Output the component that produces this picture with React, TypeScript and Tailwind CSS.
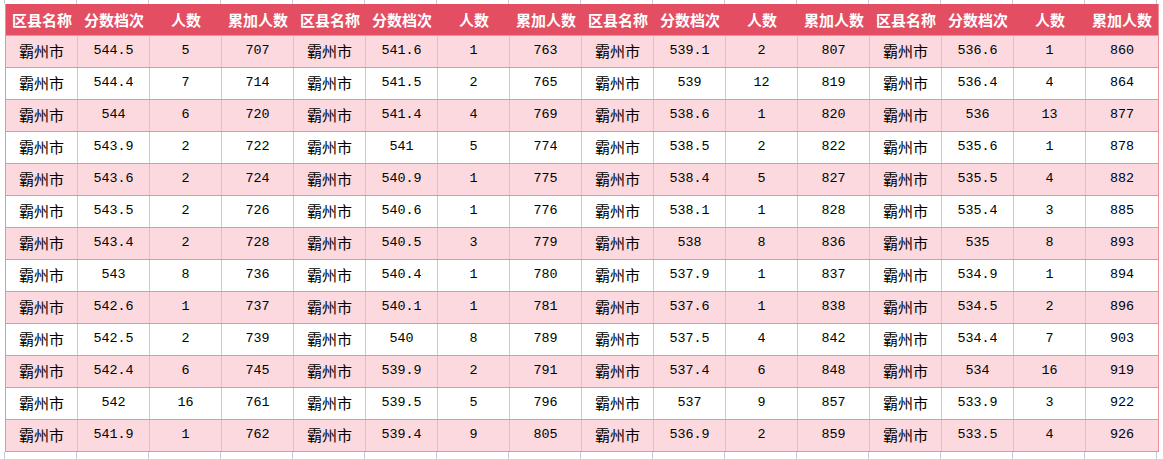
import React from "react";

const rows: [string, string, string][][] = [
  [["544.5","5","707"],["541.6","1","763"],["539.1","2","807"],["536.6","1","860"]],
  [["544.4","7","714"],["541.5","2","765"],["539","12","819"],["536.4","4","864"]],
  [["544","6","720"],["541.4","4","769"],["538.6","1","820"],["536","13","877"]],
  [["543.9","2","722"],["541","5","774"],["538.5","2","822"],["535.6","1","878"]],
  [["543.6","2","724"],["540.9","1","775"],["538.4","5","827"],["535.5","4","882"]],
  [["543.5","2","726"],["540.6","1","776"],["538.1","1","828"],["535.4","3","885"]],
  [["543.4","2","728"],["540.5","3","779"],["538","8","836"],["535","8","893"]],
  [["543","8","736"],["540.4","1","780"],["537.9","1","837"],["534.9","1","894"]],
  [["542.6","1","737"],["540.1","1","781"],["537.6","1","838"],["534.5","2","896"]],
  [["542.5","2","739"],["540","8","789"],["537.5","4","842"],["534.4","7","903"]],
  [["542.4","6","745"],["539.9","2","791"],["537.4","6","848"],["534","16","919"]],
  [["542","16","761"],["539.5","5","796"],["537","9","857"],["533.9","3","922"]],
  [["541.9","1","762"],["539.4","9","805"],["536.9","2","859"],["533.5","4","926"]],
];

const headers = ["区县名称", "分数档次", "人数", "累加人数"];
const cjk = { fontFamily: '"Noto Sans CJK SC", sans-serif' };
const mono = { fontFamily: '"Liberation Mono", monospace' };

function GridStrip({ h }: { h: string }) {
  return (
    <div className={`flex ${h}`}>
      <div className="w-[5px] shrink-0 border-r border-[#c6c9d6]" />
      {Array.from({ length: 16 }).map((_, i) => (
        <div key={i} className="w-[72px] shrink-0 border-r border-[#c6c9d6]" />
      ))}
    </div>
  );
}

export default function App() {
  return (
    <div className="w-[1163px] h-[459px] overflow-hidden bg-white">
      <GridStrip h="h-[4px]" />
      <div className="flex">
        <div className="w-[5px] shrink-0" />
        <div className="border-l border-r border-[#ee8f9a]">
          <div className="flex h-[32px] bg-[#e34e62] border-b border-[#ee8f9a]">
            {Array.from({ length: 16 }).map((_, i) => (
              <div
                key={i}
                style={cjk}
                className="w-[72px] shrink-0 flex items-center justify-center text-white font-bold text-[15px] leading-none"
              >
                {headers[i % 4]}
              </div>
            ))}
          </div>
          {rows.map((row, r) => (
            <div
              key={r}
              className={`flex h-[32px] border-b border-[#ee8f9a] ${r % 2 === 0 ? "bg-[#fbd9df]" : "bg-white"}`}
            >
              {row.map((g, gi) => (
                <React.Fragment key={gi}>
                  <div style={cjk} className="w-[72px] shrink-0 flex items-center justify-center text-[15px] text-black border-r border-[#c6c9d6]">
                    霸州市
                  </div>
                  {g.map((v, vi) => (
                    <div
                      key={vi}
                      style={mono}
                      className={`w-[72px] shrink-0 flex items-center justify-center text-[13.4px] text-black ${gi === 3 && vi === 2 ? "" : "border-r border-[#c6c9d6]"}`}
                    >
                      {v}
                    </div>
                  ))}
                </React.Fragment>
              ))}
            </div>
          ))}
        </div>
      </div>
      <GridStrip h="h-[10px]" />
    </div>
  );
}
